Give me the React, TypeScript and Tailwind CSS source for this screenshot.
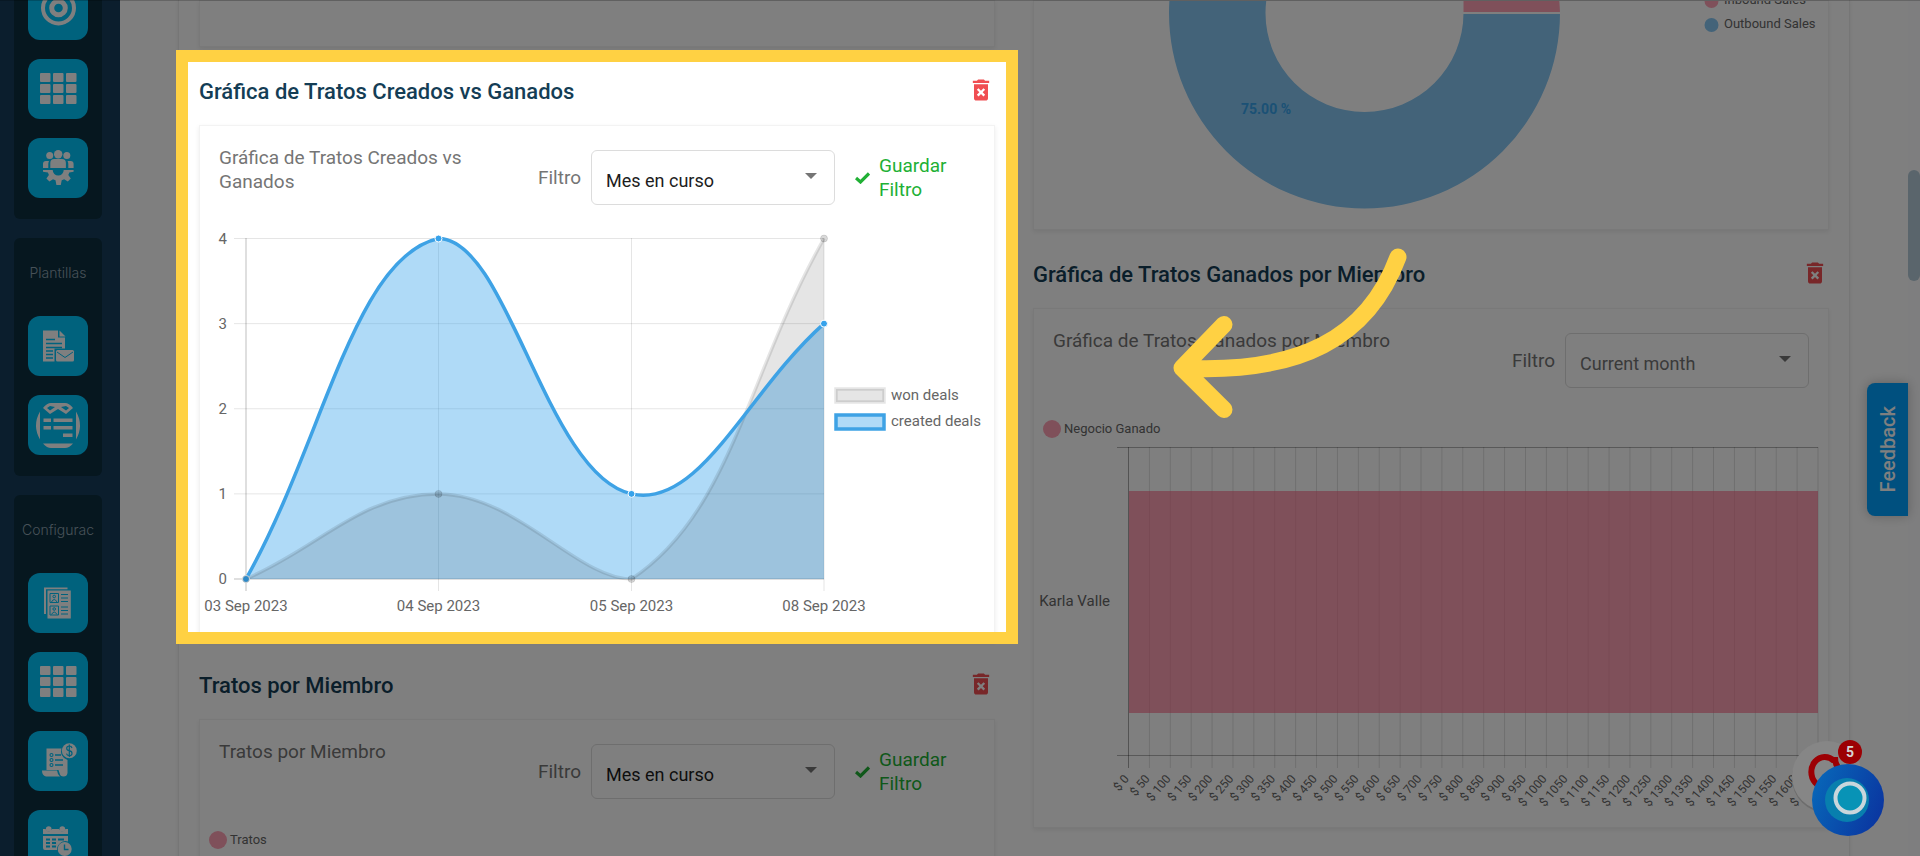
import type { ReactNode } from "react";
import { MdDeleteForever } from "react-icons/md";

type Point = { x: number; y: number };

const CHART = { left: 246, right: 824, top: 238.5, bottom: 579 };
const DAYS = [
  { label: "03 Sep 2023", x: 246 },
  { label: "04 Sep 2023", x: 438.5 },
  { label: "05 Sep 2023", x: 631.5 },
  { label: "08 Sep 2023", x: 824 },
];
const WON = [0, 1, 0, 4];
const CREATED = [0, 4, 1, 3];

const toPoints = (values: number[]): Point[] =>
  values.map((value, i) => ({
    x: DAYS[i].x,
    y: CHART.bottom - (value * (CHART.bottom - CHART.top)) / 4,
  }));

const clampY = (y: number) => Math.min(CHART.bottom, Math.max(CHART.top, y));

// Smooth line through the points, control points stay inside the chart area
const splinePath = (points: Point[], tension = 0.4) => {
  const controls = points.map((cur, i) => {
    const prev = points[i - 1] ?? cur;
    const next = points[i + 1] ?? cur;
    const d01 = Math.hypot(cur.x - prev.x, cur.y - prev.y);
    const d12 = Math.hypot(next.x - cur.x, next.y - cur.y);
    const fa = (tension * d01) / (d01 + d12);
    const fb = (tension * d12) / (d01 + d12);
    return {
      before: { x: cur.x - fa * (next.x - prev.x), y: clampY(cur.y - fa * (next.y - prev.y)) },
      after: { x: cur.x + fb * (next.x - prev.x), y: clampY(cur.y + fb * (next.y - prev.y)) },
    };
  });
  return points.reduce((path, p, i) => {
    if (i === 0) return `M${p.x} ${p.y}`;
    const a = controls[i - 1].after;
    const b = controls[i].before;
    return `${path} C${a.x} ${a.y} ${b.x} ${b.y} ${p.x} ${p.y}`;
  }, "");
};

const areaPath = (points: Point[]) =>
  `${splinePath(points)} L${CHART.right} ${CHART.bottom} L${CHART.left} ${CHART.bottom} Z`;

const GridIcon = () => (
  <>
    {[14, 25, 36].map((y) =>
      [12, 25, 38].map((x) => <rect key={`${x}-${y}`} x={x} y={y} width="10.500" height="9" rx="1" />)
    )}
  </>
);

const TargetIcon = () => (
  <g fill="none" stroke="white">
    <circle cx="30.500" cy="28" r="15.500" strokeWidth="4" />
    <circle cx="30.500" cy="28" r="6.800" strokeWidth="5" />
  </g>
);

const TeamGearIcon = () => (
  <>
    <circle cx="21.700" cy="17.500" r="3.500" />
    <circle cx="30.200" cy="16.300" r="4.200" />
    <circle cx="38.800" cy="17.500" r="3.500" />
    <path d="M22.300 30v-5q0-4 4-4h7.600q4 0 4 4v5z" />
    <path d="M15 30v-4q0-3 3-3h3q-.7 1.500-.7 3v4zM45.600 30v-4q0-3-3-3h-3q.7 1.500.7 3v4z" />
    <path d="M15 32h9.700a5.500 5.500 0 0 0 11 0h9.900v1.800l-4.300.8-1 2.500 2.500 3.500-3 3-3.600-2.400-2.500 1-.9 4.800h-4.400l-.9-4.800-2.500-1-3.600 2.400-3-3 2.500-3.500-1-2.500-4.900-.8z" />
  </>
);

const DocMailIcon = () => (
  <>
    <path d="M15 14.500h15v7h7v11H26.500V45.500H15z" />
    <path d="M31.500 14.500l6 6h-6z" />
    <path d="M18 23.500h9M18 27.500h16M18 31.500h16M18 35h7M18 38.500h7M18 42h7" stroke="#00c4fb" strokeWidth="1.300" />
    <rect x="28" y="34" width="18" height="11.500" rx="1.500" />
    <path d="M29 36l8 5.500 8-5.500" fill="none" stroke="#00c4fb" strokeWidth="1" />
  </>
);

const OrderFormIcon = () => (
  <>
    <path d="M12 16.500v28q-8-14 0-28zM48 16.500v28q8-14 0-28z" />
    <path d="M15 13q4-5 8-5h14q4 0 8 5l-7 6-8-5-8 5zM22 11l-3 2 3 2.500 5-3.500zM38 11l3 2-3 2.500-5-3.500z" fillRule="evenodd" />
    <path d="M15.500 23.500H23V27h-7.500zM25.500 23.500h19V27h-19zM15.500 31H23v3.500h-7.500zM25.500 31h19v3.500h-19zM35 38.500h9.500V42H35z" />
    <path d="M15 48.500h30q-4 4.500-8 4.500H23q-4 0-8-4.500z" />
  </>
);

const ContactsIcon = () => (
  <>
    <path d="M16 14.500h23.500v1.800H18V41h-2z" />
    <rect x="19.500" y="17.500" width="23.300" height="28" />
    <g fill="none" stroke="#00c4fb" strokeWidth="1">
      <path d="M22 20.500h8.500v9H22zM22 33h8.500v9H22zM33 21.500h7M33 25h7M33 28.500h7M33 34h7M33 37.500h7M33 41h7" />
      <circle cx="26.200" cy="23.500" r="1.300" />
      <circle cx="26.200" cy="36" r="1.300" />
      <path d="M23.500 29q2.700-5 5.500 0M23.500 41.500q2.700-5 5.500 0" />
    </g>
  </>
);

const InvoiceIcon = () => (
  <>
    <path d="M18.500 17.500h15a9 9 0 0 0 6 11.500v13q-.5 3.500-4 3.500-3.300 0-4-3.500l-1-3H18.500z" />
    <path d="M14 39.500h15q.5 4 3 6H18q-4-1-4-6z" />
    <path d="M27 24h6M27 29h8M27 34h8" stroke="#00c4fb" strokeWidth="1.300" />
    <g fill="none" stroke="#00c4fb" strokeWidth="1.100">
      <circle cx="23.500" cy="24" r="1.500" />
      <circle cx="23.500" cy="29" r="1.500" />
      <circle cx="23.500" cy="34" r="1.500" />
    </g>
    <circle cx="41.300" cy="19.700" r="7.500" />
    <path d="M44 17q-.5-2-2.700-2-2.600 0-2.600 2.200 0 2 2.600 2.500 2.700.5 2.700 2.700t-2.700 2.200q-2.300 0-2.800-2M41.300 13.500v12.500" fill="none" stroke="#00c4fb" strokeWidth="1.200" />
  </>
);

const CalendarIcon = () => (
  <>
    <circle cx="20.700" cy="19" r="2.800" />
    <circle cx="34.300" cy="19" r="2.800" />
    <path d="M15 19h2.500q3 5 6.500 0h7q3 5 6.500 0H40v5H15zM15 26h25v5.500a8.500 8.500 0 0 0-11 8.500H17q-2 0-2-2z" />
    <path d="M18 29.500h4M24 29.500h4M30 29.500h6M18 33h4M24 33h4M18 36.500h4M24 36.500h4" stroke="#00c4fb" strokeWidth="1.800" />
    <circle cx="36.700" cy="39" r="7" />
    <path d="M36.500 34.500v5h4" fill="none" stroke="#00c4fb" strokeWidth="1.400" />
  </>
);

const NavButton = ({ label, children }: { label: string; children: ReactNode }) => (
  <button type="button" aria-label={label} className="block size-[60px] shrink-0 rounded-xl bg-[#00c4fb]">
    <svg viewBox="0 0 60 60" className="size-full" fill="white">
      {children}
    </svg>
  </button>
);

const NavGroup = ({ title, children }: { title?: string; children: ReactNode }) => (
  <div className="w-[88px] shrink-0 overflow-hidden rounded-md bg-[#0c2e3e] pb-[21px]">
    {title && (
      <p className="flex h-[78px] items-center justify-center pb-2 font-['Inter',sans-serif] text-sm font-light text-[#8fa3b0]">
        {title}
      </p>
    )}
    <div className="flex flex-col items-center gap-[19px]">{children}</div>
  </div>
);

const Sidebar = () => (
  <nav className="-mt-5 flex w-[120px] shrink-0 flex-col gap-[19px] bg-[#163c5a] pl-3.5">
    <NavGroup>
      <NavButton label="Objetivos"><TargetIcon /></NavButton>
      <NavButton label="Tableros"><GridIcon /></NavButton>
      <NavButton label="Equipo"><TeamGearIcon /></NavButton>
    </NavGroup>
    <NavGroup title="Plantillas">
      <NavButton label="Plantillas de correo"><DocMailIcon /></NavButton>
      <NavButton label="Formularios"><OrderFormIcon /></NavButton>
    </NavGroup>
    <NavGroup title="Configurac">
      <NavButton label="Contactos"><ContactsIcon /></NavButton>
      <NavButton label="Campos"><GridIcon /></NavButton>
      <NavButton label="Facturas"><InvoiceIcon /></NavButton>
      <NavButton label="Calendario"><CalendarIcon /></NavButton>
    </NavGroup>
  </nav>
);

const SectionTitle = ({ children }: { children: ReactNode }) => (
  <div className="flex items-start justify-between pt-[29px] pb-[17px]">
    <h2 className="text-[22px] leading-8 font-medium text-[#143d55]">{children}</h2>
    <button type="button" aria-label="Eliminar" className="text-[#f04e52]">
      <MdDeleteForever size={28} />
    </button>
  </div>
);

const Card = ({ children }: { children?: ReactNode }) => (
  <div className="border border-[#f3f3f3] bg-white shadow-[0_2px_5px_rgba(0,0,0,0.08)]">{children}</div>
);

type CardHeaderProps = { id: string; title: string; option: string; canSave?: boolean };

const CardHeader = ({ id, title, option, canSave }: CardHeaderProps) => (
  <div className="flex items-start px-[19px] pt-5 pb-2.5 text-[19px] leading-6 text-[#757575]">
    <h3 className="flex-1 pr-4">{title}</h3>
    <div className="mt-1 flex items-center">
      <label htmlFor={id} className="mr-2.5">Filtro</label>
      <div className="relative">
        <select
          id={id}
          className={`block h-[55px] w-[244px] appearance-none rounded-md border border-[#dcdcdc] bg-white pt-1.5 pl-3.5 text-lg ${
            canSave ? "text-[#1d1d1d]" : "text-[#757575]"
          }`}
        >
          <option>{option}</option>
        </select>
        <svg viewBox="0 0 12 6" className="pointer-events-none absolute top-[23px] right-[18px] h-1.5 w-3" fill="#757575">
          <path d="M0 0h12l-6 6z" />
        </svg>
      </div>
      {canSave && (
        <button type="button" className="ml-5 flex w-[120px] items-center gap-[9px] text-left text-[#21b035]">
          <svg viewBox="0 0 15 12" className="h-3 w-[15px] shrink-0" fill="none" stroke="currentColor" strokeWidth="3.200">
            <path d="M1 6l4.500 4L14 1.500" />
          </svg>
          <span>Guardar Filtro</span>
        </button>
      )}
    </div>
  </div>
);

const BarLegend = ({ label }: { label: string }) => (
  <div className="flex items-center gap-[3px] pt-[22px] pl-[9px]">
    <span className="size-[18px] rounded-full bg-[#ffa1b5]" />
    <span className="text-[13px] leading-4 text-[#666]">{label}</span>
  </div>
);

const DealsChart = () => {
  const won = toPoints(WON);
  const created = toPoints(CREATED);
  return (
    <svg viewBox="200 215 794 425" className="block w-full text-[15px]" fill="#666">
      {[4, 3, 2, 1, 0].map((value) => {
        const y = CHART.bottom - (value * (CHART.bottom - CHART.top)) / 4;
        return (
          <g key={value}>
            <path d={`M234 ${y}H824`} stroke={value === 0 ? "rgba(0,0,0,0.25)" : "rgba(0,0,0,0.1)"} />
            <text x="227" y={y + 5} textAnchor="end">{value}</text>
          </g>
        );
      })}
      {DAYS.map((day, i) => (
        <g key={day.label}>
          <path d={`M${day.x} 238V591`} stroke={i === 0 ? "rgba(0,0,0,0.25)" : "rgba(0,0,0,0.1)"} />
          <text x={day.x} y="611" textAnchor="middle">{day.label}</text>
        </g>
      ))}
      <path d={areaPath(created)} fill="rgba(54,162,235,0.4)" />
      <path d={areaPath(won)} fill="rgba(0,0,0,0.1)" />
      <path d={splinePath(won)} fill="none" stroke="rgba(0,0,0,0.1)" strokeWidth="3.500" />
      <path d={splinePath(created)} fill="none" stroke="#3ea2e5" strokeWidth="3.500" />
      {created.map((p) => (
        <circle key={p.x} cx={p.x} cy={p.y} r="3.500" fill="#36a2eb" stroke="white" />
      ))}
      {won.map((p) => (
        <circle key={p.x} cx={p.x} cy={p.y} r="3.500" fill="rgba(0,0,0,0.15)" stroke="rgba(0,0,0,0.1)" />
      ))}
      <rect x="836" y="389" width="48" height="13" fill="#e5e5e5" stroke="rgba(0,0,0,0.1)" strokeWidth="3.500" />
      <text x="891" y="400">won deals</text>
      <rect x="836" y="415" width="48" height="14" fill="#afdaf7" stroke="#3ea2e5" strokeWidth="3.500" />
      <text x="891" y="426">created deals</text>
    </svg>
  );
};

const SalesDonut = () => (
  <svg viewBox="1034 1 794 228" className="block w-full text-[13px]" fill="#666">
    <path d="M1364.500 -182.500A195.500 195.500 0 1 0 1560 13H1463.500A99 99 0 1 1 1364.500 -86z" fill="#86c7f3" />
    <path d="M1463.500 -20h92.700a195.500 195.500 0 0 1 3.800 33h-96.500z" fill="#ffa1b5" />
    <path d="M1463 13h98" stroke="white" strokeWidth="2" />
    <text x="1266" y="114" textAnchor="middle" className="text-[14px] font-bold" fill="#36a2eb">75.00 %</text>
    <circle cx="1711.500" cy="1" r="7" fill="#ffa1b5" />
    <text x="1724" y="4">Inbound Sales</text>
    <circle cx="1711.500" cy="25" r="7" fill="#86c7f3" />
    <text x="1724" y="28">Outbound Sales</text>
  </svg>
);

const AMOUNTS = Array.from({ length: 34 }, (_, i) => i * 50);

const WonByMemberChart = () => (
  <svg viewBox="1034 438 794 389" className="block w-full text-[12px]" fill="#666">
    <path d="M1117 447.500H1818M1117 755.500H1818" stroke="rgba(0,0,0,0.3)" />
    {AMOUNTS.map((amount, i) => {
      const x = 1128.5 + (i * 689.5) / 33;
      return (
        <g key={amount}>
          <path d={`M${x} 447V768`} stroke={i === 0 ? "rgba(0,0,0,0.35)" : "rgba(0,0,0,0.13)"} />
          <text x={x + 1} y="779" textAnchor="end" transform={`rotate(-50 ${x + 1} 779)`}>$ {amount}</text>
        </g>
      );
    })}
    <rect x="1129" y="491" width="689" height="222" fill="rgba(255,99,132,0.6)" />
    <text x="1110" y="606" textAnchor="end" className="text-[15px]">Karla Valle</text>
  </svg>
);

const FeedbackButton = () => (
  <button
    type="button"
    className="absolute top-[383px] right-3 flex h-[133px] w-[41px] items-center justify-center rounded-l-lg bg-[#00a0ff] text-white shadow-[0_0_12px_rgba(0,0,0,0.25)]"
  >
    <span className="rotate-180 text-xl font-medium [writing-mode:vertical-rl]">Feedback</span>
  </button>
);

const ChatWidget = () => (
  <button type="button" aria-label="Chat, 5 mensajes" className="absolute right-9 bottom-5 z-20 h-[96px] w-[92px]">
    <svg viewBox="0 0 92 96" className="size-full overflow-visible">
      <defs>
        <linearGradient id="orb" x1="0" y1="0.300" x2="1" y2="0.700">
          <stop offset="0" stopColor="#0866b8" />
          <stop offset="1" stopColor="#0a35a0" />
        </linearGradient>
      </defs>
      <circle cx="35" cy="38" r="35" fill="#6d6d6d" />
      <circle cx="35" cy="36" r="35" fill="#868686" />
      <path d="M42 21a13.500 15 0 1 0 0 22M43 17q0 10 7 14" fill="none" stroke="#9c0004" strokeWidth="6" />
      <circle cx="58" cy="12" r="12" fill="#9c0004" />
      <text x="58" y="17" textAnchor="middle" fill="#d6d6d6" className="text-[14px] font-bold">5</text>
      <circle cx="56" cy="60" r="36" fill="url(#orb)" />
      <circle cx="55" cy="60" r="22" fill="#087fae" />
      <circle cx="58" cy="58" r="14.500" fill="#0893b6" stroke="#c9d6dc" strokeWidth="4" />
    </svg>
  </button>
);

const App = () => (
  <div className="relative flex h-screen overflow-hidden bg-white font-['Roboto',sans-serif]">
    <Sidebar />

    {/* Main Content */}
    <main className="min-w-0 flex-1 px-[58px]">
      <div className="grid min-h-full grid-cols-2 gap-[38px] border-x border-[#ececec] px-5 shadow-[0_0_4px_rgba(0,0,0,0.08)]">
        <div>
          <Card>
            <div className="h-[45px]" />
          </Card>
          <section className="relative">
            <SectionTitle>Gráfica de Tratos Creados vs Ganados</SectionTitle>
            <Card>
              <CardHeader id="filter-created" title="Gráfica de Tratos Creados vs Ganados" option="Mes en curso" canSave />
              <DealsChart />
            </Card>
            {/* Spotlight, its shadow dims the rest of the page */}
            <div className="pointer-events-none absolute top-[3px] -right-[23px] -bottom-[3px] -left-[23px] z-10 border-[12px] border-[#ffd143] shadow-[0_0_0_9999px_rgba(0,0,0,0.5)]" />
          </section>
          <section>
            <SectionTitle>Tratos por Miembro</SectionTitle>
            <Card>
              <CardHeader id="filter-member" title="Tratos por Miembro" option="Mes en curso" canSave />
              <BarLegend label="Tratos" />
              <div className="h-40" />
            </Card>
          </section>
        </div>

        <div>
          <Card>
            <SalesDonut />
          </Card>
          <section className="relative">
            <SectionTitle>Gráfica de Tratos Ganados por Miembro</SectionTitle>
            <Card>
              <CardHeader id="filter-won" title="Gráfica de Tratos Ganados por Miembro" option="Current month" />
              <BarLegend label="Negocio Ganado" />
              <WonByMemberChart />
            </Card>
            <svg
              viewBox="1173 248 234 170"
              className="pointer-events-none absolute top-[18px] left-[140px] z-20 h-[170px] w-[234px]"
              fill="none"
              stroke="#ffd143"
              strokeWidth="17"
              strokeLinecap="round"
              strokeLinejoin="round"
            >
              <path d="M1398 257C1368 338 1300 374 1182 368M1224 324.500L1182 368L1224 409.500" />
            </svg>
          </section>
        </div>
      </div>
    </main>

    {/* Scrollbar */}
    <div className="w-3 shrink-0 bg-[#fdfdff] pt-[170px]">
      <div className="h-[111px] rounded-full bg-[#b4cbd8]" />
    </div>

    <FeedbackButton />
    <ChatWidget />
    <div className="absolute inset-x-0 top-0 z-20 h-px bg-black/20" />
  </div>
);

export default App;
